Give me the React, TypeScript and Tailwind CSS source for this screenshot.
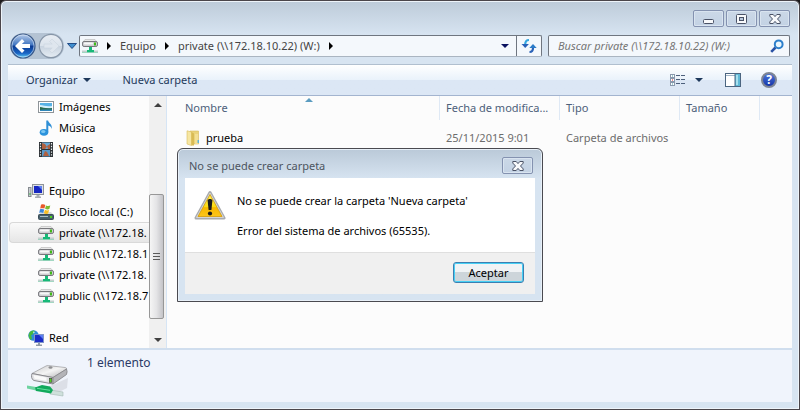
import React from "react";

type IconProps = { className?: string };

function NetDrive({ className = "h-4 w-4" }: IconProps) {
  return (
    <svg viewBox="0 0 16 16" className={className} aria-hidden="true">
      <path d="M3 1.500h10l2 2.500H1z" fill="#e8e8e8" stroke="#b5b5b5" strokeWidth=".6" />
      <rect x=".5" y="3.500" width="15" height="5" rx="1.600" fill="#cfcfd2" stroke="#77777b" />
      <rect x="2" y="4.600" width="9" height="2" rx=".8" fill="#f8f8f8" />
      <rect x="12" y="4.500" width="2" height="3" fill="#3fb818" />
      <path d="M7 9h3v3h2v2.500H5V12h2z" fill="#17b978" />
      <path d="M0 12.500h5v1.500H0zM12 12.500h4v1.500h-4z" fill="#c3cfcd" />
      <path d="M0 14.500h16" stroke="#8ccdb2" strokeWidth=".8" />
    </svg>
  );
}

function PictureIcon() {
  return (
    <svg viewBox="0 0 16 16" className="h-4 w-4" aria-hidden="true">
      <rect x=".5" y="2.500" width="15" height="11" fill="#fff" stroke="#8e9499" />
      <rect x="2" y="4" width="12" height="8" fill="#58b2e6" />
      <path d="M2 6c4 0 6 2 12 1v2H2z" fill="#d5effa" />
      <path d="M2 8c3 0 5 2 12 1v3H2z" fill="#2c6b4f" />
      <path d="M2 11c5-1 8 0 12-.6V12H2z" fill="#2f86b8" />
    </svg>
  );
}

function MusicIcon() {
  return (
    <svg viewBox="0 0 16 16" className="h-4 w-4" aria-hidden="true">
      <ellipse cx="6" cy="12.300" rx="4.300" ry="3.400" fill="#2b93dc" />
      <ellipse cx="5.200" cy="11.500" rx="2.200" ry="1.500" fill="#7cc7f2" />
      <path d="M8.300 12V.5h1.800c.4 2.700 4.900 4 3.400 8.500-.3-2.200-1.600-3-3.200-3.400V12z" fill="#2f8fd6" />
    </svg>
  );
}

function VideoIcon() {
  return (
    <svg viewBox="0 0 16 16" className="h-4 w-4" aria-hidden="true">
      <rect x="1" y="1" width="14" height="15" fill="#2d3135" />
      <rect x="4" y="1.500" width="8" height="6.500" fill="#65a9d8" />
      <rect x="4" y="9" width="8" height="6.500" fill="#5798c9" />
      <path d="M4 2l3 1 2 3-2 2H4zM12 3L9 5l1 3h2zM5 15l2-5 2 1 2 4z" fill="#b0603f" />
      <path d="M2.500 2v14M13.500 2v14" stroke="#e9eef0" strokeWidth="1.200" strokeDasharray="1.400 1.400" />
    </svg>
  );
}

function ComputerIcon() {
  return (
    <svg viewBox="0 0 16 16" className="h-4 w-4" aria-hidden="true">
      <rect x=".5" y="4.500" width="2.500" height="9" fill="#c9ced2" stroke="#868b90" />
      <path d="M1 11h2" stroke="#3fb34a" />
      <rect x="4.500" y="1.500" width="11" height="10" fill="#dde0e4" stroke="#8f9499" />
      <rect x="6" y="3" width="8" height="7" fill="#1828c2" />
      <path d="M10 3h4v4z" fill="#5f81f0" />
      <path d="M8.500 12h3v1.500h1.500V15H7v-1.500h1.500z" fill="#a9aeb3" />
    </svg>
  );
}

function LocalDiskIcon() {
  return (
    <svg viewBox="0 0 16 16" className="h-4 w-4" aria-hidden="true">
      <path d="M3 8h10l2.500 3H.5z" fill="#d5dadd" />
      <rect x=".5" y="10.500" width="15" height="5" rx="1" fill="#48606b" stroke="#3a4d57" />
      <path d="M2 12.500h8" stroke="#a9c0c9" />
      <rect x="12" y="12" width="2" height="2" fill="#4bd11c" />
      <path d="M3 .8c1.700-.7 3-.5 4.300.3L6.400 4.600C5 4 3.700 4 2.200 4.500z" fill="#e8582a" />
      <path d="M8 1.400c1.500.8 2.800.8 4.300.2l-1 3.500c-1.400.5-2.800.4-4.200-.3z" fill="#7dba2f" />
      <path d="M2 5.300c1.500-.6 2.800-.5 4.200.2L5.300 9C4 8.300 2.700 8.300 1.200 8.900z" fill="#3a86dc" />
      <path d="M6.900 5.800c1.400.7 2.800.8 4.200.2l-1 3.500c-1.400.6-2.800.5-4.200-.3z" fill="#f7bd22" />
    </svg>
  );
}

function NetworkIcon() {
  return (
    <svg viewBox="0 0 16 16" className="h-4 w-4" aria-hidden="true">
      <circle cx="5.500" cy="5.500" r="5.200" fill="#2f8ad8" />
      <path d="M1 3.500C3 0 6 .3 7 1L5 4 3 5.500 4 8l-1 2C.8 8.500.2 6 1 3.500z" fill="#46b83f" />
      <path d="M5 1.500l2 .5-1.500 1.500z" fill="#d4f2f7" />
      <rect x="6.500" y="4.500" width="9" height="8" fill="#1b2cc6" stroke="#7f95c8" />
      <path d="M11 5h4v4z" fill="#5b7df2" />
      <path d="M10 13h2v1.500h2V16H8v-1.500h2z" fill="#8f9aa6" />
    </svg>
  );
}

function FolderIcon() {
  return (
    <svg viewBox="0 0 16 16" className="h-4 w-4" aria-hidden="true">
      <path d="M5 1h8.500v13H5z" fill="#ead37b" stroke="#d6b95a" strokeWidth=".6" />
      <path d="M2 .8L6.500 2v13.500L2 14z" fill="#f6e6a2" stroke="#d8bc5d" strokeWidth=".6" />
      <path d="M6.500 2L9 3.500v12H6.500z" fill="#d9bb55" />
      <path d="M10 4h3v10h-3z" fill="#f3df94" />
      <rect x="12.500" y="10" width="1.500" height="3" fill="#5cb4dd" />
    </svg>
  );
}

function BackArrow() {
  return (
    <svg viewBox="0 0 26 26" className="h-[26px] w-[26px]" aria-hidden="true">
      <defs>
        <linearGradient id="backFill" x1="0" y1="0" x2="0" y2="1">
          <stop offset="0" stopColor="#b9cdea" />
          <stop offset=".46" stopColor="#3f74c0" />
          <stop offset=".5" stopColor="#0a3a92" />
          <stop offset=".8" stopColor="#1964c4" />
          <stop offset="1" stopColor="#5fd4fb" />
        </linearGradient>
      </defs>
      <circle cx="13" cy="13" r="12" fill="url(#backFill)" stroke="#3c5a88" strokeWidth="1.200" />
      <circle cx="13" cy="13" r="11" fill="none" stroke="#dbe8f7" strokeOpacity=".6" />
      <path d="M5 13l7-7 2.500 2.500-2.700 2.500H20v4h-8.200l2.700 2.500L12 20z" fill="#fff" />
    </svg>
  );
}

function ForwardArrow() {
  return (
    <svg viewBox="0 0 26 26" className="h-[26px] w-[26px]" aria-hidden="true">
      <defs>
        <linearGradient id="forwardFill" x1="0" y1="0" x2="0" y2="1">
          <stop offset="0" stopColor="#e9eef4" />
          <stop offset=".48" stopColor="#dbe3ec" />
          <stop offset=".52" stopColor="#c9d4e0" />
          <stop offset="1" stopColor="#e6edf4" />
        </linearGradient>
      </defs>
      <circle cx="13" cy="13" r="11.700" fill="url(#forwardFill)" stroke="#8796a8" strokeWidth="1.200" />
      <path
        d="M21 13l-7-7-2.500 2.500 2.700 2.500H6v4h8.200l-2.700 2.500L14 20z"
        fill="#dfe6ee"
        stroke="#cbd5df"
        strokeWidth=".6"
      />
    </svg>
  );
}

function Chevron() {
  return (
    <svg viewBox="0 0 8 4" className="h-1 w-2" aria-hidden="true">
      <path d="M0 0h8L4 4z" fill="currentColor" />
    </svg>
  );
}

function CrumbArrow() {
  return (
    <svg viewBox="0 0 4 8" className="h-2 w-1 shrink-0 text-black" aria-hidden="true">
      <path d="M0 0v8l4-4z" fill="currentColor" />
    </svg>
  );
}

function RefreshIcon() {
  return (
    <svg viewBox="0 0 16 16" className="h-4 w-4" aria-hidden="true">
      <path d="M8 2C5 2 4.200 3.500 4.200 6.500" fill="none" stroke="#35a7e0" strokeWidth="2.200" />
      <path d="M.5 6h7.400L4.200 10z" fill="#2a62b8" />
      <path d="M8.500 14c3 0 3.500-1.500 3.500-4" fill="none" stroke="#2a62b8" strokeWidth="2.200" />
      <path d="M8.300 10h7.400L12 6z" fill="#2b7bc8" />
    </svg>
  );
}

function SearchIcon() {
  return (
    <svg viewBox="0 0 14 14" className="h-3.5 w-3.5 shrink-0" aria-hidden="true">
      <path d="M1.200 12.800L5.500 8.500" stroke="#2a52a4" strokeWidth="2.600" />
      <circle cx="8.700" cy="5.300" r="3.900" fill="#e9f6fd" stroke="#2c7fcb" strokeWidth="2" />
    </svg>
  );
}

function ViewIcon() {
  return (
    <svg viewBox="0 0 16 14" className="h-3.5 w-4" aria-hidden="true">
      {[1, 5, 9].map((y, i) => (
        <g key={y}>
          <rect x=".5" y={y + 0.5} width="4" height="3" fill="#fff" stroke="#8a99ad" />
          <rect x="2" y={y + 1.5} width="1" height="1" fill={i === 1 ? "#d22" : "#49a"} />
          <path d={`M6 ${y + 1.5}h4M11 ${y + 1.5}h4`} stroke="#4d607c" />
        </g>
      ))}
    </svg>
  );
}

function PreviewIcon() {
  return (
    <svg viewBox="0 0 16 14" className="h-3.5 w-4" aria-hidden="true">
      <rect x=".5" y=".5" width="15" height="13" fill="#fff" stroke="#4b6580" />
      <path d="M1 2.500h9" stroke="#9fb4c6" />
      <rect x="10" y="1" width="5" height="12" fill="#5fb8d6" />
      <rect x="11" y="2" width="2" height="10" fill="#a6e0ee" />
      <path d="M10 1v12" stroke="#4b6580" />
    </svg>
  );
}

function HelpIcon() {
  return (
    <span className="flex h-4 w-4 items-center justify-center rounded-full border-2 border-[#7d8594] bg-linear-to-b from-[#4a72d8] to-[#1634a8] text-[12px] leading-none font-bold text-white">
      ?
    </span>
  );
}

function CloseGlyph() {
  return (
    <svg viewBox="0 0 12 10" className="h-2.5 w-3" aria-hidden="true">
      <path
        d="M.8.5h3.400L6 2.600 7.800.5h3.400v1.600L8.500 5l2.700 2.900v1.600H7.800L6 7.400 4.200 9.500H.8V7.900L3.500 5 .8 2.100z"
        fill="#f8f9fb"
        stroke="#4a5266"
        strokeLinejoin="round"
      />
    </svg>
  );
}

function MinimizeGlyph() {
  return (
    <svg viewBox="0 0 12 10" className="h-2.5 w-3" aria-hidden="true">
      <rect x=".5" y="5.500" width="10" height="4" rx="1" fill="#f8f9fb" stroke="#4a5266" />
    </svg>
  );
}

function MaximizeGlyph() {
  return (
    <svg viewBox="0 0 12 10" className="h-2.5 w-3" aria-hidden="true">
      <rect x=".5" y=".5" width="10" height="9" rx="1" fill="#f8f9fb" stroke="#4a5266" />
      <rect x="3.500" y="3.500" width="4" height="3" fill="#b9c8dc" stroke="#4a5266" />
    </svg>
  );
}

function WarningIcon() {
  return (
    <svg viewBox="0 0 32 32" className="h-8 w-8 shrink-0" aria-hidden="true">
      <defs>
        <linearGradient id="warnFill" x1="0" y1="0" x2="0" y2="1">
          <stop offset="0" stopColor="#fff15a" />
          <stop offset=".55" stopColor="#fddc12" />
          <stop offset=".6" stopColor="#f8b800" />
          <stop offset="1" stopColor="#fcc61c" />
        </linearGradient>
      </defs>
      <path d="M16 2.500L30 28H2z" fill="#a9abae" stroke="#a9abae" strokeWidth="3" strokeLinejoin="round" />
      <path d="M16 3L29.500 27.500h-27z" fill="#d4d5d8" stroke="#d4d5d8" strokeWidth="1" strokeLinejoin="round" />
      <path d="M16 4.500L28 26.500H4z" fill="url(#warnFill)" stroke="#d39b08" strokeWidth=".8" />
      <path d="M13.600 10.500c0-2 4.800-2 4.800 0l-1 9.500h-2.800z" fill="#1b1b1b" />
      <circle cx="16" cy="23.500" r="2.100" fill="#1b1b1b" />
    </svg>
  );
}

function BigDriveIcon() {
  return (
    <svg viewBox="0 0 44 36" className="h-9 w-11 shrink-0" aria-hidden="true">
      <defs>
        <linearGradient id="driveTop" x1="0" y1="0" x2="1" y2="1">
          <stop offset="0" stopColor="#c9c9cb" />
          <stop offset=".5" stopColor="#f4f4f4" />
          <stop offset="1" stopColor="#b0b0b2" />
        </linearGradient>
      </defs>
      <path d="M20 26l22-10-1 10-12 6z" fill="#dcdfe7" />
      <path d="M6 11.500L20 4q1-.6 2.500-.4L39 5.500q2 .4 1.500 1.500L27 15.500z" fill="url(#driveTop)" stroke="#98989b" strokeWidth=".7" />
      <ellipse cx="24.500" cy="5.500" rx="2" ry="1.200" fill="#8f8f92" />
      <path d="M6 11.500l21 4v6.500L8 18.500c-2.500-.8-3-4.500-2-7z" fill="#e2e2e5" stroke="#808084" strokeWidth=".9" />
      <path d="M27 15.500L40.500 7q1.200 2.500 0 5.500L27 22z" fill="#b4b4b8" stroke="#808084" strokeWidth=".8" />
      <path d="M7.500 13l13 2.500V19L8.500 16.800z" fill="#fafafa" />
      <rect x="23.300" y="16.300" width="2.500" height="4" fill="#4fd21e" stroke="#3c3c3e" strokeWidth=".6" />
      <path d="M1 23.500l9 1.500v3.500L1 26.500z" fill="#6fd3a0" />
      <path d="M24 28l13 2v4l-13-2z" fill="#cfe0dc" stroke="#a4b9b4" strokeWidth=".6" />
      <path d="M9 25.500l7-2.500 8 1.500 3 3.500-2 3.500L10 29z" fill="#11a95c" />
      <path d="M11 26.300l13 2" stroke="#65e0a0" />
    </svg>
  );
}

type NavEntry = { label: string; icon: React.ReactNode; root?: boolean; selected?: boolean; gap?: boolean };

const navEntries: NavEntry[] = [
  { label: "Imágenes", icon: <PictureIcon /> },
  { label: "Música", icon: <MusicIcon /> },
  { label: "Vídeos", icon: <VideoIcon /> },
  { label: "Equipo", icon: <ComputerIcon />, root: true, gap: true },
  { label: "Disco local (C:)", icon: <LocalDiskIcon /> },
  { label: "private (\\\\172.18.", icon: <NetDrive />, selected: true },
  { label: "public (\\\\172.18.1", icon: <NetDrive /> },
  { label: "private (\\\\172.18.", icon: <NetDrive /> },
  { label: "public (\\\\172.18.7", icon: <NetDrive /> },
  { label: "Red", icon: <NetworkIcon />, root: true, gap: true },
];

const captionButton =
  "flex h-[17px] w-[31px] items-center justify-center rounded-xs border border-[#8492b0] bg-linear-to-b from-[#cbd8e7] to-[#c3d2e4] shadow-[inset_0_0_0_1px_#d9e4f0]";

function Sidebar() {
  return (
    <div className="flex w-[159px] shrink-0 border-r border-[#d6e5f5]">
      <nav aria-label="Carpetas" className="min-w-0 flex-1">
        <ul>
          {navEntries.map((entry, index) => (
            <li key={index} className={entry.gap ? "mt-[21px]" : ""}>
              <a
                href="#"
                className={`ml-px flex h-[21px] items-center gap-[5px] whitespace-nowrap text-black ${
                  entry.root ? "pl-[19px]" : entry.selected ? "pl-[28px]" : "pl-[29px]"
                } ${
                  entry.selected
                    ? "rounded-l-sm border border-r-0 border-[#d9d9d9] bg-linear-to-b from-[#fafafa] to-[#e6e6e6]"
                    : ""
                }`}
              >
                <span className="shrink-0">{entry.icon}</span>
                <span>{entry.label}</span>
              </a>
            </li>
          ))}
        </ul>
      </nav>
      <div className="flex w-[17px] shrink-0 flex-col bg-[#f0f0f0] text-[#404040]">
        <button aria-label="Subir" className="flex h-[17px] items-center justify-center">
          <svg viewBox="0 0 8 4" className="h-1 w-2" aria-hidden="true">
            <path d="M0 4h8L4 0z" fill="currentColor" />
          </svg>
        </button>
        <div className="flex flex-1 flex-col justify-end pb-3">
          <div className="flex h-[125px] w-[15px] flex-col items-center justify-center gap-[2px] rounded-xs border border-[#979797] bg-linear-to-r from-[#f5f5f5] via-[#e4e4e6] to-[#c4c4c8]">
            <span className="h-px w-[7px] bg-[#5a5a5a]" />
            <span className="h-px w-[7px] bg-[#5a5a5a]" />
            <span className="h-px w-[7px] bg-[#5a5a5a]" />
          </div>
        </div>
        <button aria-label="Bajar" className="flex h-[17px] items-center justify-center">
          <Chevron />
        </button>
      </div>
    </div>
  );
}

function HeaderCell({ children, className }: { children?: React.ReactNode; className: string }) {
  return (
    <th scope="col" className={`h-6 p-0 font-normal ${className}`}>
      <div className="flex h-6 items-center border-r border-[#dfe9f5] pl-1.5">{children}</div>
    </th>
  );
}

function FileList() {
  return (
    <div className="min-w-0 flex-1">
      <table className="w-full table-fixed border-collapse text-left whitespace-nowrap">
        <thead className="text-[#4c607a]">
          <tr>
            <th scope="col" className="relative h-6 w-[273px] p-0 font-normal">
              <div className="flex h-6 items-center border-r border-[#dfe9f5] pl-[18px]">Nombre</div>
              <svg viewBox="0 0 8 4" className="absolute top-0.5 left-[138px] h-1 w-2" aria-hidden="true">
                <path d="M0 4h8L4 0z" fill="#5b9cc0" />
              </svg>
            </th>
            <HeaderCell className="w-[120px]">Fecha de modifica...</HeaderCell>
            <HeaderCell className="w-[120px]">Tipo</HeaderCell>
            <HeaderCell className="w-[80px]">Tamaño</HeaderCell>
            <td />
          </tr>
        </thead>
        <tbody className="text-[#6d6d6d]">
          <tr>
            <td className="p-0 pt-[7px] pl-[18px]">
              <div className="flex h-[21px] items-center gap-[5px] text-black">
                <FolderIcon />
                <span>prueba</span>
              </div>
            </td>
            <td className="p-0 pt-[7px] pl-1.5">25/11/2015 9:01</td>
            <td className="p-0 pt-[7px] pl-1.5">Carpeta de archivos</td>
            <td />
            <td />
          </tr>
        </tbody>
      </table>
    </div>
  );
}

function ErrorDialog() {
  return (
    <section
      role="alertdialog"
      aria-labelledby="dialog-title"
      aria-describedby="dialog-text"
      className="absolute top-[147px] left-[176px] w-[366px] rounded-t-md border border-[#4a4a50] bg-[#d7e4f1] bg-linear-to-b from-[#bac9d8] to-[#d7e4f1] to-[30px] px-[7px] pb-[7px] shadow-[inset_0_0_0_1px_#e8f0f8]"
    >
      <header className="flex h-[29px] items-center justify-between pt-1 pr-0.5 pl-1 text-[#4d5560]">
        <h2 id="dialog-title">No se puede crear carpeta</h2>
        <button aria-label="Cerrar aviso" className={captionButton}>
          <CloseGlyph />
        </button>
      </header>
      <div className="flex h-[75px] gap-[11px] border-b border-[#dfdfdf] bg-white pt-3 pl-[9px] text-black">
        <WarningIcon />
        <div id="dialog-text" className="flex flex-col gap-3.5 pt-[3px]">
          <p>No se puede crear la carpeta 'Nueva carpeta'</p>
          <p>Error del sistema de archivos (65535).</p>
        </div>
      </div>
      <footer className="flex justify-end bg-[#f0f0f0] pt-[9px] pr-[11px] pb-[11px]">
        <button className="h-[21px] w-[71px] rounded-[3px] border border-[#3c7fb1] bg-linear-to-b from-[#f0f3f5] from-50% to-[#cdd5da] to-50% leading-none text-black shadow-[inset_0_0_0_1px_#46d0f5]">
          Aceptar
        </button>
      </footer>
    </section>
  );
}

export default function App() {
  return (
    <div className="min-h-screen bg-[#1c1a1c] font-['Noto_Sans','Open_Sans',sans-serif] text-[11px] leading-4">
      <main className="relative flex min-h-screen flex-col rounded-t-md border border-[#4b464b] bg-[#d7e4f1] bg-linear-to-b from-[#bdcbd9] to-[#d7e4f1] to-[34px] px-[7px] pb-[7px] shadow-[inset_0_0_0_1px_#eef4fa]">
        <header className="flex h-[34px] items-start justify-end gap-0.5 pt-[9px] pr-0.5">
          <button aria-label="Minimizar" className={captionButton}>
            <MinimizeGlyph />
          </button>
          <button aria-label="Maximizar" className={captionButton}>
            <MaximizeGlyph />
          </button>
          <button aria-label="Cerrar" className={captionButton}>
            <CloseGlyph />
          </button>
        </header>

        <div className="flex h-[29px] items-start pr-0.5 pl-0.5 text-[#444]">
          <div className="-mt-0.5 flex shrink-0 items-center">
            <div className="flex gap-0.5 rounded-full bg-[#b4c3d3]">
              <button aria-label="Atrás">
                <BackArrow />
              </button>
              <button aria-label="Adelante">
                <ForwardArrow />
              </button>
            </div>
            <button aria-label="Páginas recientes" className="flex w-[15px] justify-center">
              <svg viewBox="0 0 10 6" className="h-1.5 w-2.5" aria-hidden="true">
                <path d="M.5.5h9L5 5.500z" fill="#3f8fd0" stroke="#234c86" />
              </svg>
            </button>
          </div>
          <div className="flex h-[22px] min-w-0 flex-1 rounded-xs border border-[#6f7680] border-b-[#aab5c1] bg-[#f4f8fc]">
            <div className="flex min-w-0 flex-1 items-center gap-[9px] pl-0.5 whitespace-nowrap">
              <NetDrive className="h-4 w-4 shrink-0" />
              <CrumbArrow />
              <button>Equipo</button>
              <CrumbArrow />
              <button>private (\\172.18.10.22) (W:)</button>
              <CrumbArrow />
            </div>
            <button
              aria-label="Ubicaciones anteriores"
              className="flex w-[22px] items-center justify-center text-[#0a1260]"
            >
              <Chevron />
            </button>
            <button
              aria-label="Actualizar"
              className="flex w-[25px] items-center justify-center border-l border-[#6f7680]"
            >
              <RefreshIcon />
            </button>
          </div>
          <label className="ml-1.5 flex h-[22px] w-[242px] shrink-0 items-center rounded-xs border border-[#6f7680] border-b-[#aab5c1] bg-[#f4f8fc] pr-[5px] pl-[9px]">
            <input
              type="search"
              aria-label="Buscar"
              placeholder="Buscar private (\\172.18.10.22) (W:)"
              className="min-w-0 flex-1 bg-transparent italic outline-none placeholder:text-[#757575]"
            />
            <SearchIcon />
          </label>
        </div>

        <div className="flex h-8 shrink-0 items-center border-t border-b border-t-[#b0bfcf] border-b-[#a3b4cf] bg-linear-to-b from-white via-[#e9f2fb] via-50% to-[#dce7f5] to-50% pr-[15px] pl-[18px] text-[#1e395b]">
          <button className="flex items-center gap-1.5">
            Organizar
            <Chevron />
          </button>
          <button className="ml-[31px]">Nueva carpeta</button>
          <div className="ml-auto flex items-center">
            <button aria-label="Cambiar la vista">
              <ViewIcon />
            </button>
            <button aria-label="Más opciones" className="ml-[9px] flex">
              <Chevron />
            </button>
            <button aria-label="Panel de vista previa" className="ml-[22px]">
              <PreviewIcon />
            </button>
            <button aria-label="Ayuda" className="ml-5">
              <HelpIcon />
            </button>
          </div>
        </div>

        <div className="flex min-h-0 flex-1 bg-[#fcfcfc]">
          <Sidebar />
          <FileList />
        </div>

        <footer className="flex h-[54px] shrink-0 items-start gap-[17px] border-t-2 border-[#d0deee] bg-[#f0f4fc] pl-[18px] text-[#2b3a66]">
          <span className="pt-3">
            <BigDriveIcon />
          </span>
          <p className="pt-[5px] text-[12px]">1 elemento</p>
        </footer>

        <ErrorDialog />
      </main>
    </div>
  );
}
